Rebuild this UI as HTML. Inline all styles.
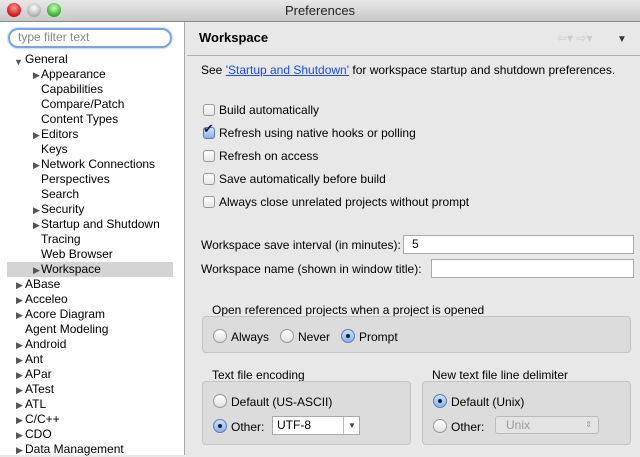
<!DOCTYPE html>
<html><head><style>
*{margin:0;padding:0;box-sizing:border-box}
body{width:640px;height:455px;overflow:hidden;font-family:"Liberation Sans",sans-serif;font-size:12px;line-height:14px;color:#000;background:#e8e8e8;position:relative}
.abs{position:absolute;white-space:nowrap}
#title{left:0;top:0;width:640px;height:22px;background:linear-gradient(#e8e8e8,#c8c8c8);border-bottom:1px solid #8a8a8a;text-align:center;font-size:13px;line-height:22px;color:#222}
.light{position:absolute;top:3px;width:14px;height:14px;border-radius:50%}
#left{left:0;top:22px;width:185px;height:433px;background:#fff;border-right:1px solid #a8a8a8}
#filter{left:8px;top:28px;width:164px;height:20px;border:2px solid #7aa6dd;border-radius:10px;padding-left:8px;line-height:15px;color:#888;font-size:12px;box-shadow:0 0 2px #7aa6dd}
.t{position:absolute;font-size:12px;line-height:15px;white-space:nowrap}
.tri{position:absolute;font-size:9px;color:#555}
#sel{left:7px;top:262px;width:166px;height:15px;background:#d4d4d4}
.cb{position:absolute;width:12px;height:12px;border:1px solid #999;border-radius:3px;background:linear-gradient(#fff,#e6e6e6)}
.rb{position:absolute;width:14px;height:14px;border:1px solid #999;border-radius:50%;background:linear-gradient(#fff,#e0e0e0)}
.rb.on{border-color:#5a7fb8;background:linear-gradient(#cfe0f5,#8bb1e6)}
.rb.on:after{content:"";position:absolute;left:4px;top:4px;width:4px;height:4px;border-radius:50%;background:#123}
.grp{position:absolute;border:1px solid #c4c4c4;border-radius:4px;background:#dcdcdc}
.inp{position:absolute;height:19px;background:#fff;border:1px solid #aaa;padding-left:10px;line-height:17px;font-size:12px}
</style></head><body>
<div id="title" class="abs">Preferences</div>
<div class="light" style="left:7px;background:radial-gradient(circle at 50% 35%,#f99,#d22 60%,#900)"></div>
<div class="light" style="left:27px;background:radial-gradient(circle at 50% 35%,#fff,#bbb 60%,#888)"></div>
<div class="light" style="left:47px;background:radial-gradient(circle at 50% 35%,#cfc,#4b3 60%,#270)"></div>
<div id="left" class="abs"></div>
<div id="filter" class="abs">type filter text</div>
<div id="sel" class="abs"></div>
<div class="tri" style="left:14px;top:55px">▼</div><div class="t" style="left:25px;top:52px">General</div>
<div class="tri" style="left:33px;top:68px">▶</div><div class="t" style="left:41px;top:67px">Appearance</div>
<div class="t" style="left:41px;top:82px">Capabilities</div>
<div class="t" style="left:41px;top:97px">Compare/Patch</div>
<div class="t" style="left:41px;top:112px">Content Types</div>
<div class="tri" style="left:33px;top:128px">▶</div><div class="t" style="left:41px;top:127px">Editors</div>
<div class="t" style="left:41px;top:142px">Keys</div>
<div class="tri" style="left:33px;top:158px">▶</div><div class="t" style="left:41px;top:157px">Network Connections</div>
<div class="t" style="left:41px;top:172px">Perspectives</div>
<div class="t" style="left:41px;top:187px">Search</div>
<div class="tri" style="left:33px;top:203px">▶</div><div class="t" style="left:41px;top:202px">Security</div>
<div class="tri" style="left:33px;top:218px">▶</div><div class="t" style="left:41px;top:217px">Startup and Shutdown</div>
<div class="t" style="left:41px;top:232px">Tracing</div>
<div class="t" style="left:41px;top:247px">Web Browser</div>
<div class="tri" style="left:33px;top:263px">▶</div><div class="t" style="left:41px;top:262px">Workspace</div>
<div class="tri" style="left:16px;top:278px">▶</div><div class="t" style="left:25px;top:277px">ABase</div>
<div class="tri" style="left:16px;top:293px">▶</div><div class="t" style="left:25px;top:292px">Acceleo</div>
<div class="tri" style="left:16px;top:308px">▶</div><div class="t" style="left:25px;top:307px">Acore Diagram</div>
<div class="t" style="left:25px;top:322px">Agent Modeling</div>
<div class="tri" style="left:16px;top:338px">▶</div><div class="t" style="left:25px;top:337px">Android</div>
<div class="tri" style="left:16px;top:353px">▶</div><div class="t" style="left:25px;top:352px">Ant</div>
<div class="tri" style="left:16px;top:368px">▶</div><div class="t" style="left:25px;top:367px">APar</div>
<div class="tri" style="left:16px;top:383px">▶</div><div class="t" style="left:25px;top:382px">ATest</div>
<div class="tri" style="left:16px;top:398px">▶</div><div class="t" style="left:25px;top:397px">ATL</div>
<div class="tri" style="left:16px;top:413px">▶</div><div class="t" style="left:25px;top:412px">C/C++</div>
<div class="tri" style="left:16px;top:428px">▶</div><div class="t" style="left:25px;top:427px">CDO</div>
<div class="tri" style="left:16px;top:443px">▶</div><div class="t" style="left:25px;top:442px">Data Management</div>

<div class="abs" style="left:199px;top:31px;font-size:13px;font-weight:bold">Workspace</div>
<div class="abs" style="left:557px;top:31px;font-size:12px;color:#ccc">⇦▾ ⇨▾</div>
<div class="abs" style="left:617px;top:33px;font-size:10px;color:#334">▼</div>
<div class="abs" style="left:187px;top:55px;width:453px;height:1px;background:#b0b0b0"></div>
<div class="abs" style="left:201px;top:63px">See <span style="color:#1a4ee6;text-decoration:underline">'Startup and Shutdown'</span> for workspace startup and shutdown preferences.</div>

<div class="cb" style="left:203px;top:104px"></div><div class="abs" style="left:219px;top:103px">Build automatically</div>
<div class="cb" style="left:203px;top:127px;border-color:#5a7fb8;background:linear-gradient(#cfe0f5,#8bb1e6)"></div><div class="abs" style="left:203px;top:122px;font-size:13px;color:#123">✔</div><div class="abs" style="left:219px;top:126px">Refresh using native hooks or polling</div>
<div class="cb" style="left:203px;top:150px"></div><div class="abs" style="left:219px;top:149px">Refresh on access</div>
<div class="cb" style="left:203px;top:173px"></div><div class="abs" style="left:219px;top:172px">Save automatically before build</div>
<div class="cb" style="left:203px;top:196px"></div><div class="abs" style="left:219px;top:195px">Always close unrelated projects without prompt</div>

<div class="abs" style="left:201px;top:238px">Workspace save interval (in minutes):</div>
<div class="inp" style="left:403px;top:235px;width:231px;padding-left:8px">5</div>
<div class="abs" style="left:201px;top:262px">Workspace name (shown in window title):</div>
<div class="inp" style="left:431px;top:259px;width:203px"></div>

<div class="abs" style="left:212px;top:303px">Open referenced projects when a project is opened</div>
<div class="grp" style="left:202px;top:316px;width:429px;height:37px"></div>
<div class="rb" style="left:213px;top:329px"></div><div class="abs" style="left:231px;top:330px">Always</div>
<div class="rb" style="left:280px;top:329px"></div><div class="abs" style="left:298px;top:330px">Never</div>
<div class="rb on" style="left:341px;top:329px"></div><div class="abs" style="left:359px;top:330px">Prompt</div>

<div class="abs" style="left:212px;top:368px">Text file encoding</div>
<div class="grp" style="left:202px;top:381px;width:209px;height:64px"></div>
<div class="rb" style="left:213px;top:394px"></div><div class="abs" style="left:231px;top:395px">Default (US-ASCII)</div>
<div class="rb on" style="left:213px;top:419px"></div><div class="abs" style="left:231px;top:420px">Other:</div>
<div class="inp" style="left:272px;top:416px;width:88px;padding-left:4px">UTF-8</div>
<div class="abs" style="left:343px;top:417px;width:17px;height:17px;border-left:1px solid #bbb;font-size:8px;text-align:center;line-height:17px;color:#444">▼</div>

<div class="abs" style="left:432px;top:368px">New text file line delimiter</div>
<div class="grp" style="left:422px;top:381px;width:209px;height:64px"></div>
<div class="rb on" style="left:433px;top:394px"></div><div class="abs" style="left:451px;top:395px">Default (Unix)</div>
<div class="rb" style="left:433px;top:419px"></div><div class="abs" style="left:451px;top:420px">Other:</div>
<div class="abs" style="left:495px;top:416px;width:104px;height:18px;border:1px solid #bbb;border-radius:3px;background:#e4e4e4;color:#999;padding-left:10px;line-height:16px">Unix<span style="position:absolute;right:6px;font-size:8px">⇕</span></div>
</body></html>
